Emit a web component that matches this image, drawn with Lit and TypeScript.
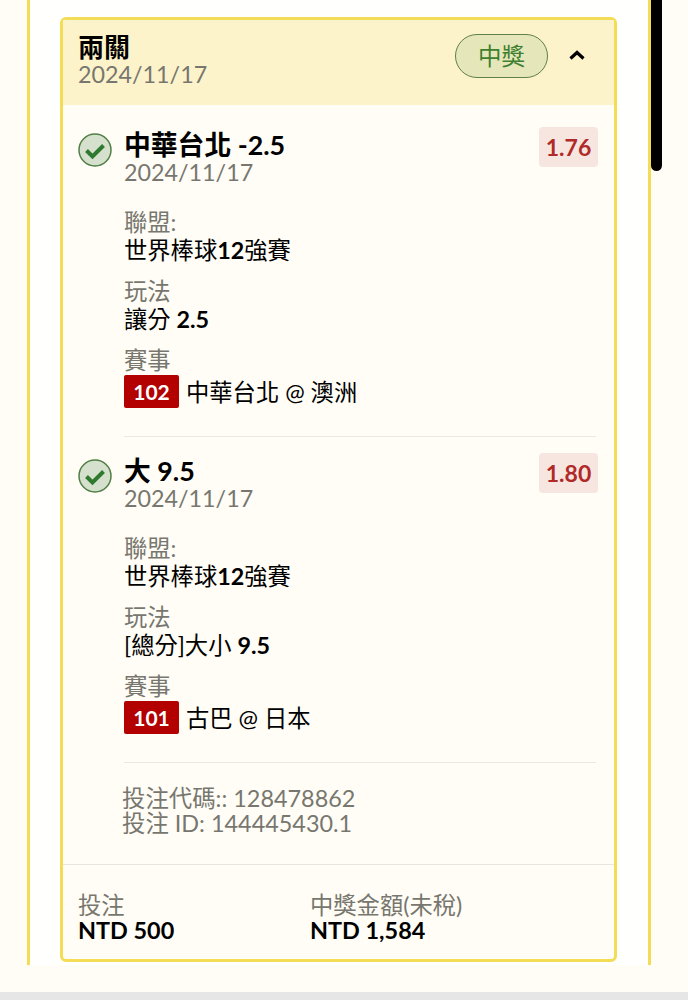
import { LitElement, html, css } from "lit";
import { customElement } from "lit/decorators.js";

interface Leg {
  title: string;
  odds: string;
  league: unknown;
  market: unknown;
  code: string;
  match: string;
}

const DATE = "2024/11/17";

const LEGS: Leg[] = [
  {
    title: "中華台北 -2.5",
    odds: "1.76",
    league: html`世界棒球<b>12</b>強賽`,
    market: html`讓分 <b>2.5</b>`,
    code: "102",
    match: "中華台北 @ 澳洲",
  },
  {
    title: "大 9.5",
    odds: "1.80",
    league: html`世界棒球<b>12</b>強賽`,
    market: html`[總分]大小 <b>9.5</b>`,
    code: "101",
    match: "古巴 @ 日本",
  },
];

@customElement("app-root")
export class AppRoot extends LitElement {
  static styles = css`
    :host {
      display: block;
      position: relative;
      height: 1000px;
      overflow: hidden;
      background: #fffdf6;
      font-family: Lato, "Noto Sans CJK TC", sans-serif;
      color: #000;
    }
    .page {
      height: 992px;
      box-sizing: border-box;
    }
    .panel {
      box-sizing: border-box;
      width: 624px;
      height: 965px;
      margin-left: 27px;
      padding: 17px 31px 0 30px;
      background: #fffffd;
      border-left: 3px solid #f3dc56;
      border-right: 3px solid #f3dc56;
    }
    .card {
      box-sizing: border-box;
      height: 945px;
      display: flex;
      flex-direction: column;
      background: #fffdf6;
      border: 3px solid #f3dc56;
      border-radius: 6px;
    }
    .head {
      box-sizing: border-box;
      height: 85px;
      flex: none;
      display: flex;
      align-items: center;
      justify-content: space-between;
      padding: 0 29px 4px 15px;
      background: #fdf3cb;
    }
    .head-title {
      font-size: 26px;
      line-height: 27px;
      font-weight: 700;
    }
    .date {
      font-size: 23.3px;
      line-height: 26px;
      color: #77776f;
    }
    .head-right {
      display: flex;
      align-items: center;
      gap: 21px;
      padding-bottom: 9px;
    }
    .won {
      box-sizing: border-box;
      width: 93px;
      height: 44px;
      padding-bottom: 2px;
      display: flex;
      align-items: center;
      justify-content: center;
      border: 1.5px solid #5f8145;
      border-radius: 22px;
      background: #e5e7bb;
      color: #3f7f2f;
      font-size: 23.5px;
    }
    .chev {
      width: 16px;
      height: 10px;
      display: block;
      margin-top: -3px;
    }
    .body {
      flex: 1;
      padding: 22px 18px 0 15px;
    }
    .leg {
      display: grid;
      grid-template-columns: 34px 1fr;
      column-gap: 12px;
    }
    .check {
      width: 34px;
      height: 34px;
      margin-top: 6px;
      display: block;
    }
    .leg-main {
      padding-bottom: 28px;
      border-bottom: 1px solid #e9e8e4;
    }
    .leg + .leg {
      margin-top: 16px;
    }
    .leg-head {
      display: flex;
      align-items: flex-start;
      justify-content: space-between;
    }
    .leg-title {
      font-size: 26.8px;
      line-height: 28px;
      font-weight: 700;
      margin-top: 4px;
    }
    .odds {
      box-sizing: border-box;
      width: 59px;
      height: 40px;
      margin-right: -2px;
      display: flex;
      align-items: center;
      justify-content: center;
      background: #f7e5df;
      border-radius: 4px;
      color: #b02a2a;
      font-size: 23px;
      font-weight: 700;
    }
    .leg-date {
      margin-top: -8px;
    }
    .field {
      margin-top: 14px;
      font-size: 23.3px;
      line-height: 28px;
    }
    .fields {
      margin-top: 24px;
    }
    .label {
      color: #77776f;
      line-height: 27px;
    }
    .value b {
      font-weight: 700;
    }
    .match {
      display: flex;
      align-items: center;
      gap: 7px;
      margin-top: 1px;
    }
    .code {
      width: 55px;
      height: 33px;
      display: flex;
      align-items: center;
      justify-content: center;
      background: #b30000;
      border-radius: 2px;
      color: #fff;
      font-size: 21px;
      font-weight: 700;
    }
    .ids {
      margin: 22.5px 0 0 44px;
      font-size: 23.4px;
      line-height: 25px;
      color: #77776f;
    }
    .foot {
      flex: none;
      height: 95px;
      box-sizing: border-box;
      display: grid;
      grid-template-columns: 232px 1fr;
      padding: 27px 15px 0;
      border-top: 1px solid #e9e6e2;
    }
    .foot-label {
      font-size: 23.3px;
      line-height: 26px;
      color: #77776f;
    }
    .foot-value {
      font-size: 23.4px;
      line-height: 25px;
      font-weight: 700;
    }
    .band {
      height: 8px;
      background: #e6e6e6;
    }
    .scroll-thumb {
      position: absolute;
      left: 651px;
      top: -10px;
      width: 11px;
      height: 181px;
      border-radius: 6px;
      background: #000;
    }
  `;

  private renderCheck() {
    return html`<svg class="check" viewBox="0 0 34 34">
      <circle cx="17" cy="17" r="16" fill="#d5e1cd" stroke="#4f7f45" stroke-width="1.5"></circle>
      <path d="M8.5 17.5l6 6L25.5 12.5" fill="none" stroke="#2f7a2f" stroke-width="4"></path>
    </svg>`;
  }

  private renderLeg(leg: Leg) {
    return html`<div class="leg">
      ${this.renderCheck()}
      <div class="leg-main">
        <div class="leg-head">
          <div class="leg-title">${leg.title}</div>
          <div class="odds">${leg.odds}</div>
        </div>
        <div class="date leg-date">${DATE}</div>
        <div class="fields">
          <div class="field"><div class="label">聯盟:</div><div class="value">${leg.league}</div></div>
          <div class="field"><div class="label">玩法</div><div class="value">${leg.market}</div></div>
          <div class="field">
            <div class="label">賽事</div>
            <div class="match"><span class="code">${leg.code}</span><span>${leg.match}</span></div>
          </div>
        </div>
      </div>
    </div>`;
  }

  override render() {
    return html`
      <div class="page">
        <div class="panel">
          <div class="card">
            <div class="head">
              <div>
                <div class="head-title">兩關</div>
                <div class="date">${DATE}</div>
              </div>
              <div class="head-right">
                <div class="won">中獎</div>
                <svg class="chev" viewBox="0 0 16 10">
                  <path d="M1.5 8.5L8 2.5l6.5 6" fill="none" stroke="#000" stroke-width="3.2"></path>
                </svg>
              </div>
            </div>
            <div class="body">
              ${LEGS.map((leg) => this.renderLeg(leg))}
              <div class="ids">投注代碼:: 128478862<br />投注 ID: 144445430.1</div>
            </div>
            <div class="foot">
              <div><div class="foot-label">投注</div><div class="foot-value">NTD 500</div></div>
              <div><div class="foot-label">中獎金額(未稅)</div><div class="foot-value">NTD 1,584</div></div>
            </div>
          </div>
        </div>
      </div>
      <div class="band"></div>
      <div class="scroll-thumb"></div>
    `;
  }
}
